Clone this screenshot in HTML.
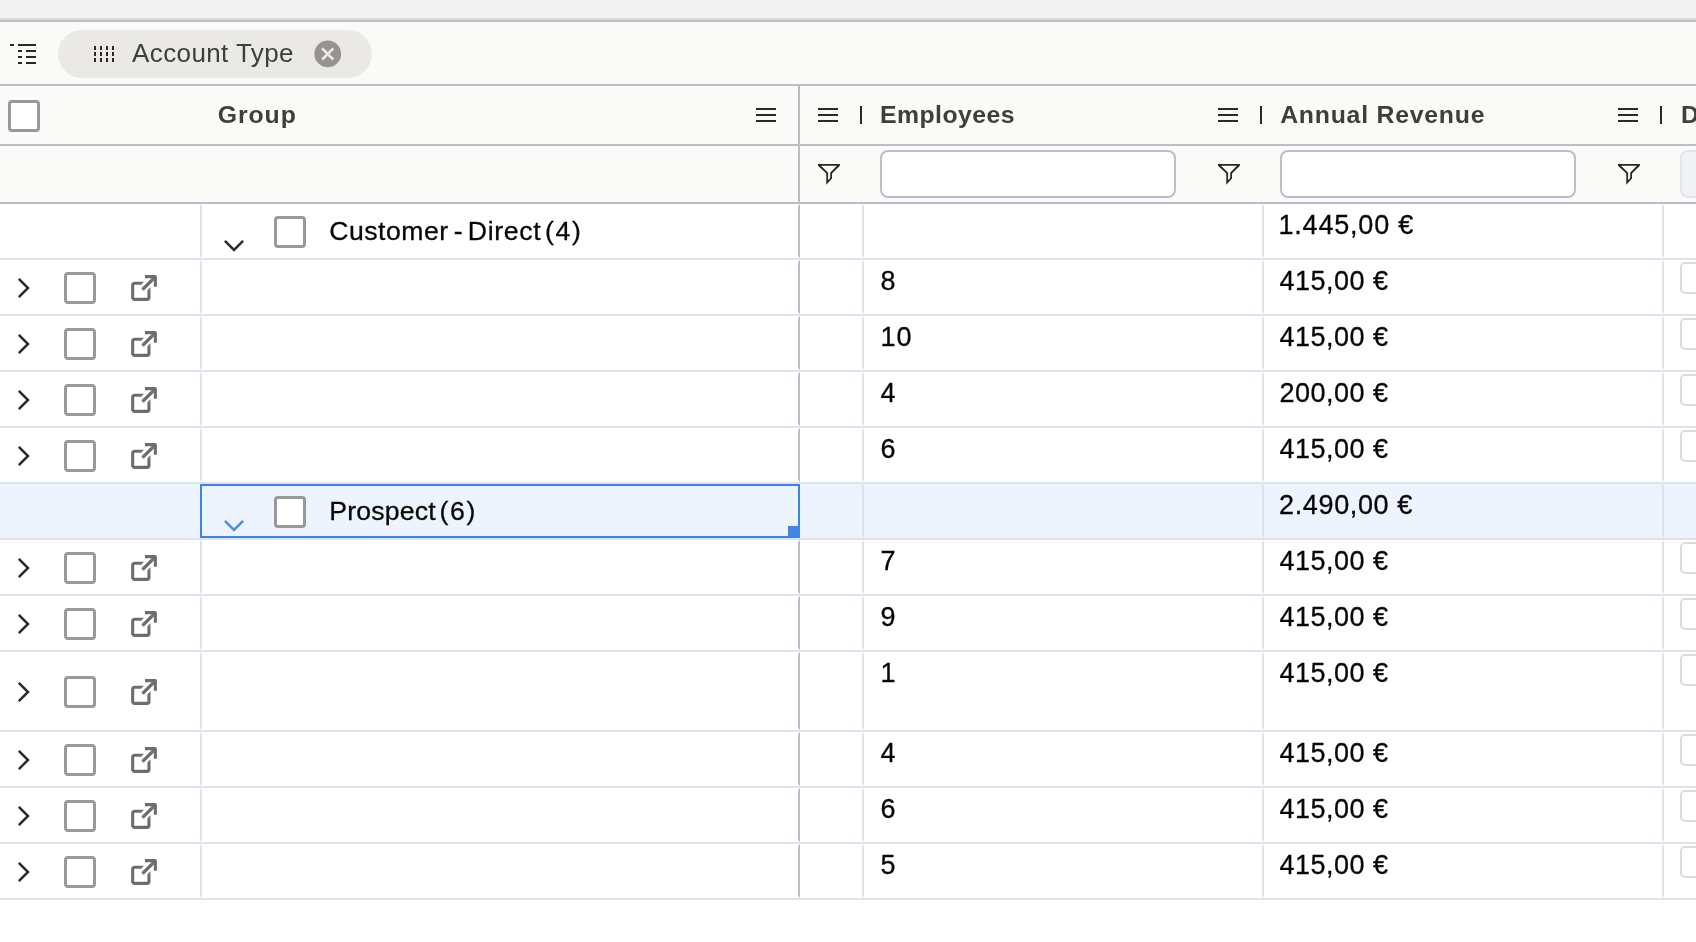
<!DOCTYPE html><html lang="en"><head><meta charset="utf-8"><title>Accounts grid</title><style>
*{box-sizing:border-box;margin:0;padding:0}
html,body{width:1696px;height:942px;overflow:hidden;background:#fff}
body{font-family:"Liberation Sans",sans-serif;color:#080707;position:relative}
#app{will-change:transform;position:absolute;left:0;top:0;width:1696px;height:942px;overflow:hidden;background:#fff}
.abs{position:absolute}
.topband{left:0;top:0;width:1696px;height:18px;background:#f3f2f2}
.l1{left:0;top:18px;width:1696px;height:2px;background:#dddbda}
.l2{left:0;top:20px;width:1696px;height:2px;background:#babfc7}
.panel{left:0;top:22px;width:1696px;height:62px;background:#fafaf9}
.hl{left:0;width:1696px;height:2px;background:#babfc7}
.hdr{left:0;top:86px;width:1696px;height:58px;background:#fafaf9}
.flt{left:0;top:146px;width:1696px;height:56px;background:#fafaf9}
.pill{left:58px;top:30px;width:314px;height:48px;border-radius:24px;background:#eae9e7}
.t{position:absolute;white-space:nowrap;line-height:1}
.pilltxt{left:132px;top:39.6px;font-size:26px;color:#3e3e3c;letter-spacing:0.4px}
.ht{font-weight:bold;color:#3e3e3c;top:102.5px;font-size:24.8px}
.gv.gc{letter-spacing:1.7px}
.cb{position:absolute;width:32px;height:32px;border:3.3px solid #999;border-radius:4px;background:#fff}
.scb{position:absolute;width:32px;height:32px;border:2px solid #dddbda;border-radius:5px;background:#fff}
.row{position:absolute;left:0;width:1696px;border-bottom:2px solid #dde2eb;background:#fff}
.row.f{background:#edf4fe}
.cell{position:absolute;top:0;height:100%;border:2px solid transparent}
.cell.bl{border-left-color:#dde2eb}
.cell.pin{border-right-color:#babfc7}
.row.f .cell.bl{border-left-color:#dbe0ea}
.row.f .cell.pin{border:2px solid #3c84e2}
.v{position:absolute;white-space:nowrap;line-height:1;font-size:27px;top:5.5px;letter-spacing:0.5px;-webkit-text-stroke:0.3px #080707}
.gv{position:absolute;white-space:nowrap;line-height:1;font-size:26.6px;letter-spacing:0.2px;-webkit-text-stroke:0.3px #080707}
.inp{position:absolute;top:150px;height:48px;width:296px;border:2px solid #babfc7;border-radius:8px;background:#fff}
.inp.dis{background:#f1f2f5;border-color:#e2e5ea}
svg{position:absolute;overflow:visible}
.vline{left:798px;top:86px;width:2px;height:116px;background:#babfc7}
.sep{top:106px;width:2px;height:18px;background:#2b2826}
</style></head><body><div id="app">
<div class="abs topband"></div><div class="abs l1"></div><div class="abs l2"></div><div class="abs panel"></div>
<div class="abs" style="left:10px;top:44px;width:4px;height:2px;background:#2b2826"></div><div class="abs" style="left:18px;top:44px;width:18px;height:2px;background:#2b2826"></div><div class="abs" style="left:18px;top:50px;width:4px;height:2px;background:#2b2826"></div><div class="abs" style="left:26px;top:50px;width:10px;height:2px;background:#2b2826"></div><div class="abs" style="left:18px;top:56px;width:4px;height:2px;background:#2b2826"></div><div class="abs" style="left:26px;top:56px;width:10px;height:2px;background:#2b2826"></div><div class="abs" style="left:18px;top:62px;width:4px;height:2px;background:#2b2826"></div><div class="abs" style="left:26px;top:62px;width:10px;height:2px;background:#2b2826"></div>
<div class="abs pill"></div>
<div class="abs" style="left:93.65px;top:46px;width:2.2px;height:4.3px;background:#2b2826"></div><div class="abs" style="left:93.65px;top:51.7px;width:2.2px;height:4.3px;background:#2b2826"></div><div class="abs" style="left:93.65px;top:57.6px;width:2.2px;height:4.3px;background:#2b2826"></div><div class="abs" style="left:99.80000000000001px;top:46px;width:2.2px;height:4.3px;background:#2b2826"></div><div class="abs" style="left:99.80000000000001px;top:51.7px;width:2.2px;height:4.3px;background:#2b2826"></div><div class="abs" style="left:99.80000000000001px;top:57.6px;width:2.2px;height:4.3px;background:#2b2826"></div><div class="abs" style="left:105.9px;top:46px;width:2.2px;height:4.3px;background:#2b2826"></div><div class="abs" style="left:105.9px;top:51.7px;width:2.2px;height:4.3px;background:#2b2826"></div><div class="abs" style="left:105.9px;top:57.6px;width:2.2px;height:4.3px;background:#2b2826"></div><div class="abs" style="left:111.80000000000001px;top:46px;width:2.2px;height:4.3px;background:#2b2826"></div><div class="abs" style="left:111.80000000000001px;top:51.7px;width:2.2px;height:4.3px;background:#2b2826"></div><div class="abs" style="left:111.80000000000001px;top:57.6px;width:2.2px;height:4.3px;background:#2b2826"></div>
<span class="t pilltxt">Account Type</span>
<svg style="left:310px;top:36px" width="36" height="36" viewBox="0 0 36 36"><circle cx="17.75" cy="17.9" r="13.35" fill="#969492"/><path d="M12.1,12.3 L23.3,23.5 M23.3,12.3 L12.1,23.5" stroke="#eae9e7" stroke-width="2.6" fill="none"/></svg>
<div class="abs hl" style="top:84px"></div><div class="abs hdr"></div><div class="abs hl" style="top:144px"></div><div class="abs flt"></div><div class="abs hl" style="top:202px"></div>
<div class="abs vline"></div>
<div class="cb" style="left:8px;top:100px"></div>
<span class="t ht" style="left:217.8px;letter-spacing:0.9px">Group</span>
<div class="abs" style="left:756px;top:108px;width:20px;height:2px;background:#2b2826"></div><div class="abs" style="left:756px;top:114px;width:20px;height:2px;background:#2b2826"></div><div class="abs" style="left:756px;top:120px;width:20px;height:2px;background:#2b2826"></div>
<div class="abs" style="left:818px;top:108px;width:20px;height:2px;background:#2b2826"></div><div class="abs" style="left:818px;top:114px;width:20px;height:2px;background:#2b2826"></div><div class="abs" style="left:818px;top:120px;width:20px;height:2px;background:#2b2826"></div><div class="abs sep" style="left:860px"></div>
<span class="t ht" style="left:880px;letter-spacing:0.45px" id="h_emp">Employees</span>
<div class="abs" style="left:1218px;top:108px;width:20px;height:2px;background:#2b2826"></div><div class="abs" style="left:1218px;top:114px;width:20px;height:2px;background:#2b2826"></div><div class="abs" style="left:1218px;top:120px;width:20px;height:2px;background:#2b2826"></div><div class="abs sep" style="left:1260px"></div>
<span class="t ht" style="left:1280.2px;letter-spacing:0.77px" id="h_rev">Annual Revenue</span>
<div class="abs" style="left:1618px;top:108px;width:20px;height:2px;background:#2b2826"></div><div class="abs" style="left:1618px;top:114px;width:20px;height:2px;background:#2b2826"></div><div class="abs" style="left:1618px;top:120px;width:20px;height:2px;background:#2b2826"></div><div class="abs sep" style="left:1660px"></div>
<span class="t ht" style="left:1681px" id="h_d">D</span>
<svg style="left:808px;top:154px" width="44" height="40" viewBox="0 0 44 40"><path fill-rule="evenodd" fill="#2b2826" d="M10,10 H31.9 V11.7 L24,19.6 V24.6 L18.3,30.8 V19.6 L10,11.7 Z M13,11.8 H28.9 L22.2,18.8 V23.9 L20.1,26.3 V18.8 Z"/></svg><div class="inp" style="left:880px"></div><svg style="left:1208px;top:154px" width="44" height="40" viewBox="0 0 44 40"><path fill-rule="evenodd" fill="#2b2826" d="M10,10 H31.9 V11.7 L24,19.6 V24.6 L18.3,30.8 V19.6 L10,11.7 Z M13,11.8 H28.9 L22.2,18.8 V23.9 L20.1,26.3 V18.8 Z"/></svg><div class="inp" style="left:1280px"></div><svg style="left:1608px;top:154px" width="44" height="40" viewBox="0 0 44 40"><path fill-rule="evenodd" fill="#2b2826" d="M10,10 H31.9 V11.7 L24,19.6 V24.6 L18.3,30.8 V19.6 L10,11.7 Z M13,11.8 H28.9 L22.2,18.8 V23.9 L20.1,26.3 V18.8 Z"/></svg><div class="inp dis" style="left:1680px"></div>
<div class="row" style="top:204px;height:56px">
<div class="cell" style="left:0;width:200px"></div>
<div class="cell bl pin" style="left:200px;width:600px"></div>
<div class="cell" style="left:800px;width:62px"></div>
<div class="cell bl" style="left:862px;width:400px"><span class="v" style="left:16.6px"></span></div>
<div class="cell bl" style="left:1262px;width:400px"><span class="v" style="left:14.5px;letter-spacing:0.8px">1.445,00 €</span></div>
<div class="cell bl" style="left:1662px;width:400px"></div>
</div>
<svg style="left:214px;top:226px" width="40" height="40" viewBox="0 0 40 40"><path d="M10.9,14.9 L20,24 L29.1,14.9" fill="none" stroke="#2e2c2a" stroke-width="2.5"/></svg>
<div class="cb" style="left:274px;top:216px"></div>
<span class="gv" style="left:329.3px;top:218.2px"><span style="letter-spacing:0.5px">Customer</span><span style="margin-left:-2.4px"> - </span><span style="margin-left:-2.7px;letter-spacing:0.7px">Direct</span></span>
<span class="gv gc" style="left:545px;top:218.2px">(4)</span>
<div class="row" style="top:260px;height:56px">
<div class="cell" style="left:0;width:200px"></div>
<div class="cell bl pin" style="left:200px;width:600px"></div>
<div class="cell" style="left:800px;width:62px"></div>
<div class="cell bl" style="left:862px;width:400px"><span class="v" style="left:16.6px">8</span></div>
<div class="cell bl" style="left:1262px;width:400px"><span class="v" style="left:15.4px">415,00 €</span></div>
<div class="cell bl" style="left:1662px;width:400px"></div>
</div>
<svg style="left:0;top:260.0px" width="48" height="56" viewBox="0 0 48 56"><path d="M18.8,18.9 L28,28 L18.8,37.1" fill="none" stroke="#2e2c2a" stroke-width="2.5"/></svg>
<div class="cb" style="left:64px;top:272.0px"></div>
<svg style="left:124px;top:268.0px" width="40" height="40" viewBox="0 0 40 40"><g fill="none" stroke="#706e6b"><path d="M26,15.2 H10.5 a1.85,1.85 0 0 0 -1.85,1.85 V29.5 a1.85,1.85 0 0 0 1.85,1.85 H23.1 a1.85,1.85 0 0 0 1.85,-1.85 V14" stroke-width="3.1"/><path d="M18.5,21.25 L30.5,9.25" stroke="#fff" stroke-width="8.56"/><path d="M18.5,21.6 L31.2,8.9" stroke-width="3.4"/><path d="M21,8.6 H31.35 V18.8" stroke-width="3.1" stroke-linejoin="round"/></g></svg>
<div class="scb" style="left:1680px;top:262px"></div>
<div class="row" style="top:316px;height:56px">
<div class="cell" style="left:0;width:200px"></div>
<div class="cell bl pin" style="left:200px;width:600px"></div>
<div class="cell" style="left:800px;width:62px"></div>
<div class="cell bl" style="left:862px;width:400px"><span class="v" style="left:16.6px;letter-spacing:1px">10</span></div>
<div class="cell bl" style="left:1262px;width:400px"><span class="v" style="left:15.4px">415,00 €</span></div>
<div class="cell bl" style="left:1662px;width:400px"></div>
</div>
<svg style="left:0;top:316.0px" width="48" height="56" viewBox="0 0 48 56"><path d="M18.8,18.9 L28,28 L18.8,37.1" fill="none" stroke="#2e2c2a" stroke-width="2.5"/></svg>
<div class="cb" style="left:64px;top:328.0px"></div>
<svg style="left:124px;top:324.0px" width="40" height="40" viewBox="0 0 40 40"><g fill="none" stroke="#706e6b"><path d="M26,15.2 H10.5 a1.85,1.85 0 0 0 -1.85,1.85 V29.5 a1.85,1.85 0 0 0 1.85,1.85 H23.1 a1.85,1.85 0 0 0 1.85,-1.85 V14" stroke-width="3.1"/><path d="M18.5,21.25 L30.5,9.25" stroke="#fff" stroke-width="8.56"/><path d="M18.5,21.6 L31.2,8.9" stroke-width="3.4"/><path d="M21,8.6 H31.35 V18.8" stroke-width="3.1" stroke-linejoin="round"/></g></svg>
<div class="scb" style="left:1680px;top:318px"></div>
<div class="row" style="top:372px;height:56px">
<div class="cell" style="left:0;width:200px"></div>
<div class="cell bl pin" style="left:200px;width:600px"></div>
<div class="cell" style="left:800px;width:62px"></div>
<div class="cell bl" style="left:862px;width:400px"><span class="v" style="left:16.6px">4</span></div>
<div class="cell bl" style="left:1262px;width:400px"><span class="v" style="left:15.4px">200,00 €</span></div>
<div class="cell bl" style="left:1662px;width:400px"></div>
</div>
<svg style="left:0;top:372.0px" width="48" height="56" viewBox="0 0 48 56"><path d="M18.8,18.9 L28,28 L18.8,37.1" fill="none" stroke="#2e2c2a" stroke-width="2.5"/></svg>
<div class="cb" style="left:64px;top:384.0px"></div>
<svg style="left:124px;top:380.0px" width="40" height="40" viewBox="0 0 40 40"><g fill="none" stroke="#706e6b"><path d="M26,15.2 H10.5 a1.85,1.85 0 0 0 -1.85,1.85 V29.5 a1.85,1.85 0 0 0 1.85,1.85 H23.1 a1.85,1.85 0 0 0 1.85,-1.85 V14" stroke-width="3.1"/><path d="M18.5,21.25 L30.5,9.25" stroke="#fff" stroke-width="8.56"/><path d="M18.5,21.6 L31.2,8.9" stroke-width="3.4"/><path d="M21,8.6 H31.35 V18.8" stroke-width="3.1" stroke-linejoin="round"/></g></svg>
<div class="scb" style="left:1680px;top:374px"></div>
<div class="row" style="top:428px;height:56px">
<div class="cell" style="left:0;width:200px"></div>
<div class="cell bl pin" style="left:200px;width:600px"></div>
<div class="cell" style="left:800px;width:62px"></div>
<div class="cell bl" style="left:862px;width:400px"><span class="v" style="left:16.6px">6</span></div>
<div class="cell bl" style="left:1262px;width:400px"><span class="v" style="left:15.4px">415,00 €</span></div>
<div class="cell bl" style="left:1662px;width:400px"></div>
</div>
<svg style="left:0;top:428.0px" width="48" height="56" viewBox="0 0 48 56"><path d="M18.8,18.9 L28,28 L18.8,37.1" fill="none" stroke="#2e2c2a" stroke-width="2.5"/></svg>
<div class="cb" style="left:64px;top:440.0px"></div>
<svg style="left:124px;top:436.0px" width="40" height="40" viewBox="0 0 40 40"><g fill="none" stroke="#706e6b"><path d="M26,15.2 H10.5 a1.85,1.85 0 0 0 -1.85,1.85 V29.5 a1.85,1.85 0 0 0 1.85,1.85 H23.1 a1.85,1.85 0 0 0 1.85,-1.85 V14" stroke-width="3.1"/><path d="M18.5,21.25 L30.5,9.25" stroke="#fff" stroke-width="8.56"/><path d="M18.5,21.6 L31.2,8.9" stroke-width="3.4"/><path d="M21,8.6 H31.35 V18.8" stroke-width="3.1" stroke-linejoin="round"/></g></svg>
<div class="scb" style="left:1680px;top:430px"></div>
<div class="row f" style="top:484px;height:56px">
<div class="cell" style="left:0;width:200px"></div>
<div class="cell bl pin" style="left:200px;width:600px"></div>
<div class="cell" style="left:800px;width:62px"></div>
<div class="cell bl" style="left:862px;width:400px"><span class="v" style="left:16.6px"></span></div>
<div class="cell bl" style="left:1262px;width:400px"><span class="v" style="left:15.1px;letter-spacing:0.63px">2.490,00 €</span></div>
<div class="cell bl" style="left:1662px;width:400px"></div>
</div>
<svg style="left:214px;top:506px" width="40" height="40" viewBox="0 0 40 40"><path d="M10.9,14.9 L20,24 L29.1,14.9" fill="none" stroke="#4790ea" stroke-width="2.5"/></svg>
<div class="cb" style="left:274px;top:496px"></div>
<span class="gv" style="left:329.3px;top:498.2px">Prospect</span>
<span class="gv gc" style="left:439.4px;top:498.2px">(6)</span>
<div class="abs" style="left:788px;top:526px;width:12px;height:12px;background:#4087e6"></div>
<div class="row" style="top:540px;height:56px">
<div class="cell" style="left:0;width:200px"></div>
<div class="cell bl pin" style="left:200px;width:600px"></div>
<div class="cell" style="left:800px;width:62px"></div>
<div class="cell bl" style="left:862px;width:400px"><span class="v" style="left:16.6px">7</span></div>
<div class="cell bl" style="left:1262px;width:400px"><span class="v" style="left:15.4px">415,00 €</span></div>
<div class="cell bl" style="left:1662px;width:400px"></div>
</div>
<svg style="left:0;top:540.0px" width="48" height="56" viewBox="0 0 48 56"><path d="M18.8,18.9 L28,28 L18.8,37.1" fill="none" stroke="#2e2c2a" stroke-width="2.5"/></svg>
<div class="cb" style="left:64px;top:552.0px"></div>
<svg style="left:124px;top:548.0px" width="40" height="40" viewBox="0 0 40 40"><g fill="none" stroke="#706e6b"><path d="M26,15.2 H10.5 a1.85,1.85 0 0 0 -1.85,1.85 V29.5 a1.85,1.85 0 0 0 1.85,1.85 H23.1 a1.85,1.85 0 0 0 1.85,-1.85 V14" stroke-width="3.1"/><path d="M18.5,21.25 L30.5,9.25" stroke="#fff" stroke-width="8.56"/><path d="M18.5,21.6 L31.2,8.9" stroke-width="3.4"/><path d="M21,8.6 H31.35 V18.8" stroke-width="3.1" stroke-linejoin="round"/></g></svg>
<div class="scb" style="left:1680px;top:542px"></div>
<div class="row" style="top:596px;height:56px">
<div class="cell" style="left:0;width:200px"></div>
<div class="cell bl pin" style="left:200px;width:600px"></div>
<div class="cell" style="left:800px;width:62px"></div>
<div class="cell bl" style="left:862px;width:400px"><span class="v" style="left:16.6px">9</span></div>
<div class="cell bl" style="left:1262px;width:400px"><span class="v" style="left:15.4px">415,00 €</span></div>
<div class="cell bl" style="left:1662px;width:400px"></div>
</div>
<svg style="left:0;top:596.0px" width="48" height="56" viewBox="0 0 48 56"><path d="M18.8,18.9 L28,28 L18.8,37.1" fill="none" stroke="#2e2c2a" stroke-width="2.5"/></svg>
<div class="cb" style="left:64px;top:608.0px"></div>
<svg style="left:124px;top:604.0px" width="40" height="40" viewBox="0 0 40 40"><g fill="none" stroke="#706e6b"><path d="M26,15.2 H10.5 a1.85,1.85 0 0 0 -1.85,1.85 V29.5 a1.85,1.85 0 0 0 1.85,1.85 H23.1 a1.85,1.85 0 0 0 1.85,-1.85 V14" stroke-width="3.1"/><path d="M18.5,21.25 L30.5,9.25" stroke="#fff" stroke-width="8.56"/><path d="M18.5,21.6 L31.2,8.9" stroke-width="3.4"/><path d="M21,8.6 H31.35 V18.8" stroke-width="3.1" stroke-linejoin="round"/></g></svg>
<div class="scb" style="left:1680px;top:598px"></div>
<div class="row" style="top:652px;height:80px">
<div class="cell" style="left:0;width:200px"></div>
<div class="cell bl pin" style="left:200px;width:600px"></div>
<div class="cell" style="left:800px;width:62px"></div>
<div class="cell bl" style="left:862px;width:400px"><span class="v" style="left:16.6px">1</span></div>
<div class="cell bl" style="left:1262px;width:400px"><span class="v" style="left:15.4px">415,00 €</span></div>
<div class="cell bl" style="left:1662px;width:400px"></div>
</div>
<svg style="left:0;top:664.0px" width="48" height="56" viewBox="0 0 48 56"><path d="M18.8,18.9 L28,28 L18.8,37.1" fill="none" stroke="#2e2c2a" stroke-width="2.5"/></svg>
<div class="cb" style="left:64px;top:676.0px"></div>
<svg style="left:124px;top:672.0px" width="40" height="40" viewBox="0 0 40 40"><g fill="none" stroke="#706e6b"><path d="M26,15.2 H10.5 a1.85,1.85 0 0 0 -1.85,1.85 V29.5 a1.85,1.85 0 0 0 1.85,1.85 H23.1 a1.85,1.85 0 0 0 1.85,-1.85 V14" stroke-width="3.1"/><path d="M18.5,21.25 L30.5,9.25" stroke="#fff" stroke-width="8.56"/><path d="M18.5,21.6 L31.2,8.9" stroke-width="3.4"/><path d="M21,8.6 H31.35 V18.8" stroke-width="3.1" stroke-linejoin="round"/></g></svg>
<div class="scb" style="left:1680px;top:654px"></div>
<div class="row" style="top:732px;height:56px">
<div class="cell" style="left:0;width:200px"></div>
<div class="cell bl pin" style="left:200px;width:600px"></div>
<div class="cell" style="left:800px;width:62px"></div>
<div class="cell bl" style="left:862px;width:400px"><span class="v" style="left:16.6px">4</span></div>
<div class="cell bl" style="left:1262px;width:400px"><span class="v" style="left:15.4px">415,00 €</span></div>
<div class="cell bl" style="left:1662px;width:400px"></div>
</div>
<svg style="left:0;top:732.0px" width="48" height="56" viewBox="0 0 48 56"><path d="M18.8,18.9 L28,28 L18.8,37.1" fill="none" stroke="#2e2c2a" stroke-width="2.5"/></svg>
<div class="cb" style="left:64px;top:744.0px"></div>
<svg style="left:124px;top:740.0px" width="40" height="40" viewBox="0 0 40 40"><g fill="none" stroke="#706e6b"><path d="M26,15.2 H10.5 a1.85,1.85 0 0 0 -1.85,1.85 V29.5 a1.85,1.85 0 0 0 1.85,1.85 H23.1 a1.85,1.85 0 0 0 1.85,-1.85 V14" stroke-width="3.1"/><path d="M18.5,21.25 L30.5,9.25" stroke="#fff" stroke-width="8.56"/><path d="M18.5,21.6 L31.2,8.9" stroke-width="3.4"/><path d="M21,8.6 H31.35 V18.8" stroke-width="3.1" stroke-linejoin="round"/></g></svg>
<div class="scb" style="left:1680px;top:734px"></div>
<div class="row" style="top:788px;height:56px">
<div class="cell" style="left:0;width:200px"></div>
<div class="cell bl pin" style="left:200px;width:600px"></div>
<div class="cell" style="left:800px;width:62px"></div>
<div class="cell bl" style="left:862px;width:400px"><span class="v" style="left:16.6px">6</span></div>
<div class="cell bl" style="left:1262px;width:400px"><span class="v" style="left:15.4px">415,00 €</span></div>
<div class="cell bl" style="left:1662px;width:400px"></div>
</div>
<svg style="left:0;top:788.0px" width="48" height="56" viewBox="0 0 48 56"><path d="M18.8,18.9 L28,28 L18.8,37.1" fill="none" stroke="#2e2c2a" stroke-width="2.5"/></svg>
<div class="cb" style="left:64px;top:800.0px"></div>
<svg style="left:124px;top:796.0px" width="40" height="40" viewBox="0 0 40 40"><g fill="none" stroke="#706e6b"><path d="M26,15.2 H10.5 a1.85,1.85 0 0 0 -1.85,1.85 V29.5 a1.85,1.85 0 0 0 1.85,1.85 H23.1 a1.85,1.85 0 0 0 1.85,-1.85 V14" stroke-width="3.1"/><path d="M18.5,21.25 L30.5,9.25" stroke="#fff" stroke-width="8.56"/><path d="M18.5,21.6 L31.2,8.9" stroke-width="3.4"/><path d="M21,8.6 H31.35 V18.8" stroke-width="3.1" stroke-linejoin="round"/></g></svg>
<div class="scb" style="left:1680px;top:790px"></div>
<div class="row" style="top:844px;height:56px">
<div class="cell" style="left:0;width:200px"></div>
<div class="cell bl pin" style="left:200px;width:600px"></div>
<div class="cell" style="left:800px;width:62px"></div>
<div class="cell bl" style="left:862px;width:400px"><span class="v" style="left:16.6px">5</span></div>
<div class="cell bl" style="left:1262px;width:400px"><span class="v" style="left:15.4px">415,00 €</span></div>
<div class="cell bl" style="left:1662px;width:400px"></div>
</div>
<svg style="left:0;top:844.0px" width="48" height="56" viewBox="0 0 48 56"><path d="M18.8,18.9 L28,28 L18.8,37.1" fill="none" stroke="#2e2c2a" stroke-width="2.5"/></svg>
<div class="cb" style="left:64px;top:856.0px"></div>
<svg style="left:124px;top:852.0px" width="40" height="40" viewBox="0 0 40 40"><g fill="none" stroke="#706e6b"><path d="M26,15.2 H10.5 a1.85,1.85 0 0 0 -1.85,1.85 V29.5 a1.85,1.85 0 0 0 1.85,1.85 H23.1 a1.85,1.85 0 0 0 1.85,-1.85 V14" stroke-width="3.1"/><path d="M18.5,21.25 L30.5,9.25" stroke="#fff" stroke-width="8.56"/><path d="M18.5,21.6 L31.2,8.9" stroke-width="3.4"/><path d="M21,8.6 H31.35 V18.8" stroke-width="3.1" stroke-linejoin="round"/></g></svg>
<div class="scb" style="left:1680px;top:846px"></div>
</div></body></html>
